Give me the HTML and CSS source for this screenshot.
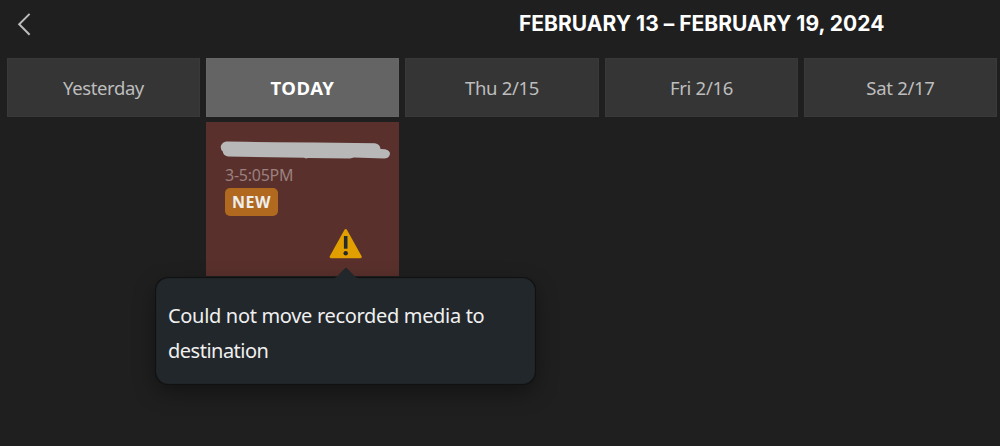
FILE: index.html
```html
<!DOCTYPE html>
<html lang="en">
<head>
<meta charset="utf-8">
<title>Recording schedule</title>
<link rel="stylesheet" href="styles.css">
</head>
<body>
<header class="toolbar">
  <button class="back" aria-label="Back"><svg width="16" height="24" viewBox="0 0 16 24"><path d="M14.6 1.9 4.2 12.3 14.6 22.7"/></svg></button>
  <h1 class="range"><span>FEBRUARY 13 – FEBRUARY 19, 2024</span></h1>
</header>
<main class="week">
  <section class="day"><h2 class="day-name yesterday"><span>Yesterday</span></h2></section>
  <section class="day">
    <h2 class="day-name today"><span>TODAY</span></h2>
    <article class="recording">
      <svg class="redacted" width="170" height="19" viewBox="0 0 170 19"><path d="M7 .6 26 .8 56 1.2 96 1.6 155 2.2Q160 3 160.5 8L165 8.3Q170 9.5 170 13 169 17.5 164 17.5L134 16.5 130 17.5 88 17 86 17.6 84 16.8 8 15.5Q3 14.5 2.8 10.5 0 8 1 4.5 3 .6 7 .6Z"/></svg>
      <div class="time"><span>3-5:05PM</span></div>
      <div class="badge"><span>NEW</span></div>
      <div class="warning">
        <svg width="34" height="31" viewBox="0 0 34 31"><path class="sign" d="M15.5 1.8Q16.7 0 17.9 1.8L32.5 28Q33.3 30 31.5 30.2H1.9Q.1 30 .9 28Z"/><path class="mark" d="M14.9 8h3.6v12.7h-3.6z"/><circle class="mark" cx="16.7" cy="25.2" r="2.2"/></svg>
        <div class="tooltip" role="tooltip"><svg class="arrow" width="24" height="14" viewBox="0 0 24 14"><path d="M0 14V13Q2 12.5 3 11.5L11 3.2Q12 2.2 13 3.2L21 11.5Q22 12.5 24 13V14Z"/></svg><p><span>Could not move recorded media to</span><br><span class="tail">destination</span></p></div>
      </div>
    </article>
  </section>
  <section class="day"><h2 class="day-name thu"><span>Thu 2/15</span></h2></section>
  <section class="day"><h2 class="day-name fri"><span>Fri 2/16</span></h2></section>
  <section class="day"><h2 class="day-name sat"><span>Sat 2/17</span></h2></section>
</main>
</body>
</html>
```
FILE: styles.css
```css
* { box-sizing: border-box; }
body { margin: 0; height: 446px; overflow: hidden; background: #1f1f1f; color: #bdbdbd; font-family: "Noto Sans", sans-serif; }
.toolbar { display: flex; height: 58px; padding-left: 15px; }
.back { margin: 0; padding: 12px 0 0; width: 16px; border: 0; background: none; display: flex; align-items: flex-start; }
.back path { fill: none; stroke: #bcbcbc; stroke-width: 2; }
.range { margin: 0 0 0 488px; font: 700 21px/48px Inter, sans-serif; letter-spacing: .02px; color: #fff; white-space: nowrap; }
.week { display: grid; grid-template-columns: 193px 193px 194px 193px 193px; column-gap: 6px; padding-left: 7px; }
.day { display: flex; flex-direction: column; gap: 5px; }
.day-name { margin: 0; height: 59px; background: #353535; border: 1px solid #393939; font-size: 18.5px; font-weight: 400; line-height: 58px; text-align: center; letter-spacing: -.4px; }
.thu, .fri, .sat { letter-spacing: -.3px; }
.today { background: #646464; border-color: #676767; color: #fff; font-weight: 700; letter-spacing: .5px; line-height: 57px; }
.recording { height: 154px; background: #59302c; display: flex; flex-direction: column; align-items: flex-start; padding: 19px 0 0 19px; }
.redacted { margin-left: -5px; fill: #b8b8b8; }
.time { margin-top: 3px; height: 22px; font-size: 16px; line-height: 25px; letter-spacing: -.25px; color: #9b817f; }
.badge { margin-top: 3px; width: 53px; height: 28px; border-radius: 5px; background: #b1691f; color: #eee; font-weight: 700; font-size: 16px; line-height: 28px; text-align: center; letter-spacing: .5px; }
.warning { position: relative; margin: 12px 0 0 104px; width: 34px; height: 31px; }
.warning > svg { display: block; }
.sign { fill: #e2a000; }
.mark { fill: #252a2c; }
.tooltip { position: absolute; left: -173px; top: 50px; width: 379px; height: 106px; padding: 19px 11px; border-radius: 12px; background: #22272b; color: #f0f0f0; border: 1px solid #1f2427; box-shadow: 0 0 0 1px #111, 0 8px 22px rgba(0,0,0,.4); }
.arrow { position: absolute; left: 177px; top: -14px; fill: #22272b; }
.tooltip p { margin: 0; font-size: 20px; line-height: 35px; letter-spacing: -.32px; white-space: nowrap; }
.tail { letter-spacing: -.5px; }
```
